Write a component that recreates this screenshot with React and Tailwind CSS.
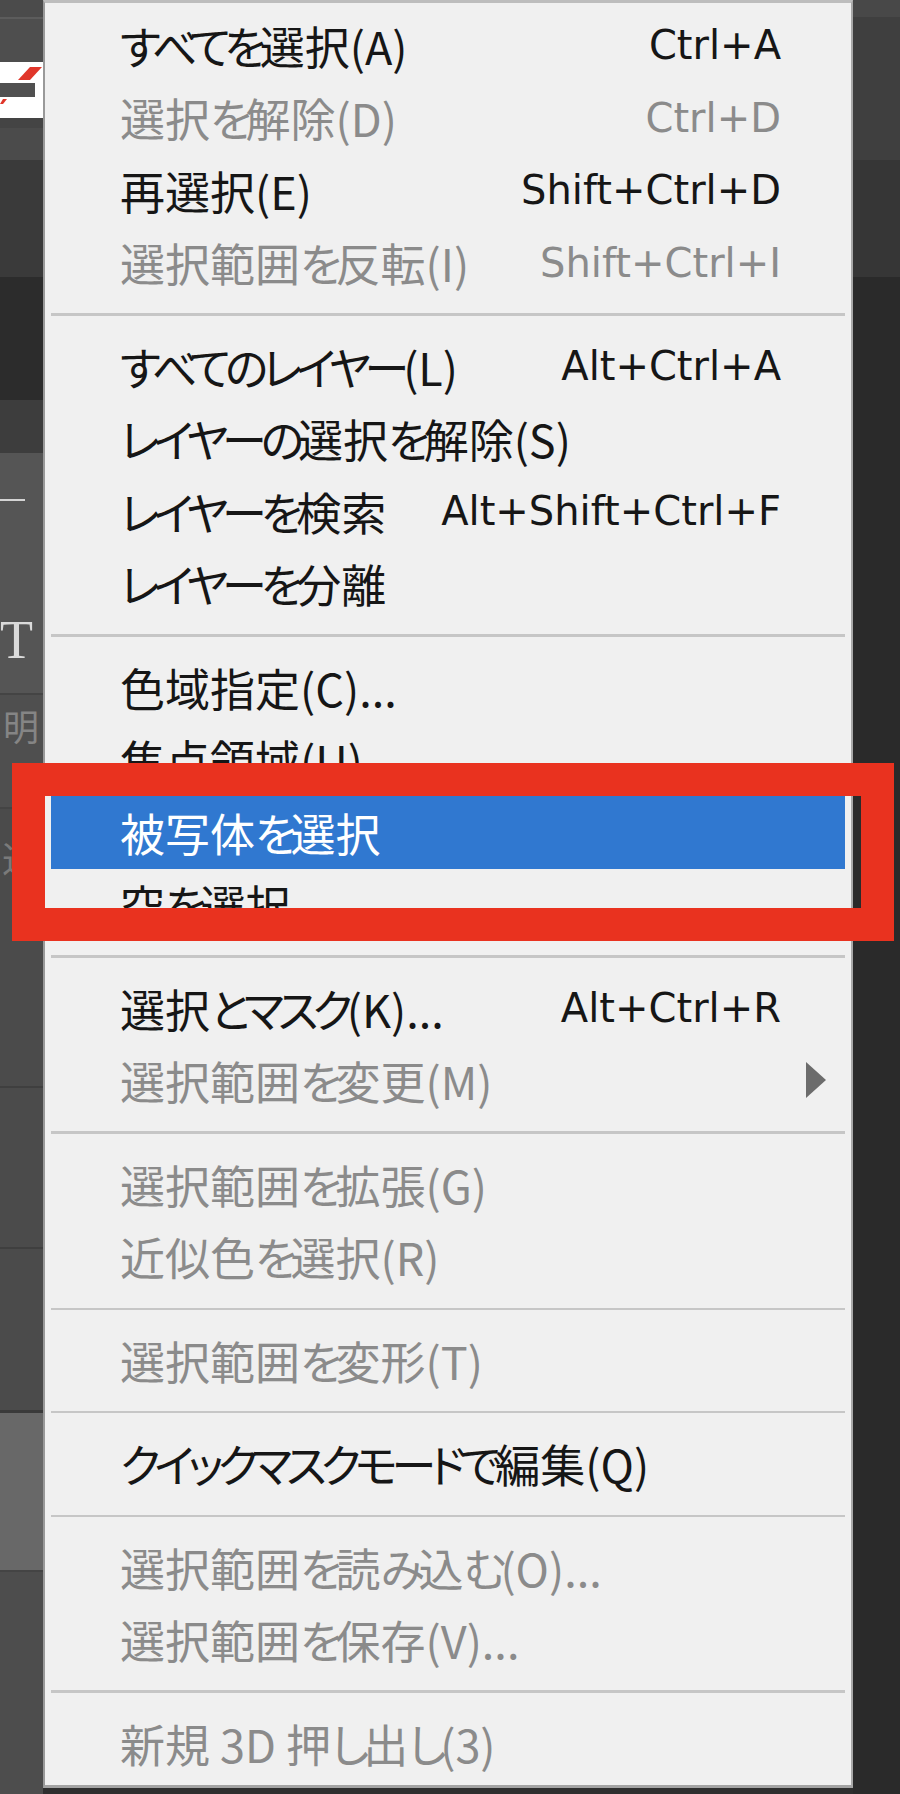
const items = [
  { label: "すべてを選択(A)", key: "Ctrl+A" },
  { label: "選択を解除(D)", key: "Ctrl+D", off: true },
  { label: "再選択(E)", key: "Shift+Ctrl+D" },
  { label: "選択範囲を反転(I)", key: "Shift+Ctrl+I", off: true },
  { sep: 3 },
  { label: "すべてのレイヤー(L)", key: "Alt+Ctrl+A" },
  { label: "レイヤーの選択を解除(S)" },
  { label: "レイヤーを検索", key: "Alt+Shift+Ctrl+F" },
  { label: "レイヤーを分離" },
  { sep: 3 },
  { label: "色域指定(C)..." },
  { label: "焦点領域(U)..." },
  { label: "被写体を選択", active: true },
  { label: "空を選択" },
  { sep: 3 },
  { label: "選択とマスク(K)...", key: "Alt+Ctrl+R" },
  { label: "選択範囲を変更(M)", off: true, sub: true },
  { sep: 3 },
  { label: "選択範囲を拡張(G)", off: true },
  { label: "近似色を選択(R)", off: true },
  { sep: 2 },
  { label: "選択範囲を変形(T)", off: true },
  { sep: 2 },
  { label: "クイックマスクモードで編集(Q)" },
  { sep: 2 },
  { label: "選択範囲を読み込む(O)...", off: true },
  { label: "選択範囲を保存(V)...", off: true },
  { sep: 3 },
  { label: "新規 3D 押し出し(3)", off: true },
];

// kana in the UI font are narrower than kanji, so tighten those runs
const isKana = (ch) => /[\u3040-\u30ff]/.test(ch);

const Label = ({ text }) => {
  const runs = [];
  for (const ch of text) {
    const kana = isKana(ch);
    const last = runs[runs.length - 1];
    if (last && last.kana === kana) last.text += ch;
    else runs.push({ kana, text: ch });
  }
  return (
    <span className="font-['Noto_Sans_CJK_JP',sans-serif] text-[45px] leading-none [font-feature-settings:'palt'] whitespace-nowrap">
      {runs.map((r, i) =>
        r.kana ? (
          <span key={i} className="tracking-[-6px]">
            {r.text}
          </span>
        ) : (
          <span key={i}>{r.text}</span>
        )
      )}
    </span>
  );
};

const MenuRow = ({ item }) => {
  if (item.sep) {
    return (
      <div className="h-[31px] mx-[6px] flex items-center">
        <div
          className={
            item.sep === 3
              ? "w-full h-[3px] bg-[#c6c6c6]"
              : "w-full h-[2px] bg-[#c6c6c6]"
          }
        />
      </div>
    );
  }

  const tone = item.active
    ? "bg-[#3078d0] text-white"
    : item.off
      ? "text-[#8b8b8b]"
      : "text-[#161616]";

  return (
    <div
      className={`h-[72.5px] mx-[6px] flex items-center pl-[69px] ${
        item.sub ? "pr-[19px]" : "pr-[64px]"
      } ${tone}`}
    >
      <Label text={item.label} />
      <span className="flex-1" />
      {item.key && (
        <span className="font-['DejaVu_Sans',sans-serif] text-[40px] leading-none whitespace-nowrap">
          {item.key}
        </span>
      )}
      {item.sub && (
        <svg width="20" height="36" viewBox="0 0 20 36" className="mb-[2px]">
          <polygon points="0,0 20,18 0,36" fill="#6c6c6c" />
        </svg>
      )}
    </div>
  );
};

const LeftStrip = () => (
  <div className="w-[43px] flex flex-col overflow-hidden">
    <div className="h-[17px] bg-[#4b4b4b]" />
    <div className="h-[2px] bg-[#5c5c5c]" />
    <div className="h-[43px] bg-[#4e4e4e]" />
    <div className="h-[56px] bg-white">
      <svg width="43" height="56" viewBox="0 0 43 56">
        <polygon points="30,5 42,5 30,18 18,18" fill="#e0362a" />
        <rect x="0" y="21" width="35" height="14" fill="#505050" />
        <polygon points="3,37 7,37 3,42 0,42" fill="#e0362a" />
      </svg>
    </div>
    <div className="h-[10px] bg-[#444444]" />
    <div className="h-[32px] bg-[#4b4b4b]" />
    <div className="h-[117px] bg-[#3a3a3a]" />
    <div className="h-[123px] bg-[#2c2c2c]" />
    <div className="h-[53px] bg-[#3d3d3d]" />
    <div className="h-[240px] bg-[#555555] flex flex-col">
      <div className="h-[2px] w-[25px] bg-[#d4d4d4] mt-[46px]" />
      <div className="mt-[112px] h-[50px] font-['Liberation_Serif',serif] text-[54px] leading-none text-[#dadada]">
        T
      </div>
    </div>
    <div className="h-[2px] bg-[#444444]" />
    <div className="h-[112px] bg-[#4f4f4f] pt-[12px] pl-[3px]">
      <div className="font-['Noto_Sans_CJK_JP',sans-serif] text-[36px] leading-none text-[#858585]">
        明
      </div>
    </div>
    <div className="h-[2px] bg-[#444444]" />
    <div className="h-[277px] bg-[#4b4b4b] pt-[30px] pl-[2px]">
      <div className="font-['Noto_Sans_CJK_JP',sans-serif] text-[36px] leading-none text-[#7a7a7a]">
        込
      </div>
    </div>
    <div className="h-[2px] bg-[#3f3f3f]" />
    <div className="h-[159px] bg-[#4b4b4b]" />
    <div className="h-[2px] bg-[#3f3f3f]" />
    <div className="h-[161px] bg-[#4b4b4b]" />
    <div className="h-[3px] bg-[#3a3a3a]" />
    <div className="h-[157px] bg-[#686868]" />
    <div className="h-[2px] bg-[#444444]" />
    <div className="flex-1 bg-[#4d4d4d]" />
  </div>
);

const RightStrip = () => (
  <div className="w-[47px] flex flex-col">
    <div className="h-[17px] bg-[#484848]" />
    <div className="h-[143px] bg-[#3f3f3f]" />
    <div className="h-[117px] bg-[#363636]" />
    <div className="flex-1 bg-[#2a2a2a]" />
  </div>
);

export default function App() {
  return (
    <div className="relative w-[900px] h-[1794px] flex bg-[#2a2a2a] overflow-hidden">
      <LeftStrip />

      <div className="w-[810px] flex flex-col bg-[#2e2e2e]">
        <div className="bg-[#f0f0f0] border-t-[3px] border-t-[#bdbdbd] border-l-2 border-l-[#999999] border-r-2 border-r-[#a8a8a8] border-b-[3px] border-b-[#a3a3a3] pt-[6px] pb-[5px]">
          {items.map((item, i) => (
            <MenuRow key={i} item={item} />
          ))}
        </div>
      </div>

      <RightStrip />

      {/* red annotation frame */}
      <div className="absolute left-[12px] top-[763px] w-[882px] h-[178px] border-[33px] border-[#e9321f]" />
    </div>
  );
}
